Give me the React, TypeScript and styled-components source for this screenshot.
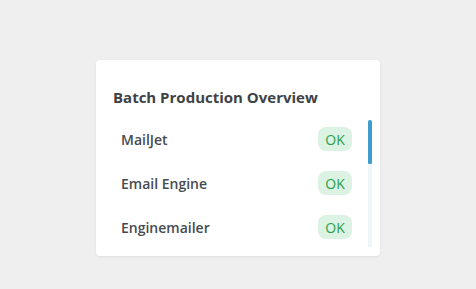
import * as React from 'react';
import styled, {createGlobalStyle} from 'styled-components';

const GlobalStyle = createGlobalStyle`
  html, body {
    margin: 0;
    padding: 0;
    background-color: #efefef;
    font-family: 'Open Sans', 'Noto Sans', sans-serif;
  }
`;

const Page = styled.div`
  display: flex;
  justify-content: center;
  padding-top: 60px;
  min-height: 229px;
`;

const Card = styled.div`
  width: 284px;
  height: 196px;
  box-sizing: border-box;
  padding: 27px 8px 9px 17px;
  background-color: #ffffff;
  border-radius: 4px;
  box-shadow: 0 1px 3px rgba(0, 0, 0, 0.07);
  display: flex;
  flex-direction: column;
`;

const Title = styled.h2`
  margin: 0 0 13px 0;
  font-size: 15px;
  line-height: 20px;
  font-weight: 700;
  color: #3e4246;
`;

const Body = styled.div`
  display: flex;
  height: 127px;
`;

const List = styled.ul`
  flex: 1;
  list-style: none;
  margin: 0;
  padding: 7px 0;
  overflow: hidden;
  display: flex;
  flex-direction: column;
  gap: 20px;
`;

const Row = styled.li`
  display: flex;
  align-items: center;
  justify-content: space-between;
  flex-shrink: 0;
  height: 24px;
  padding: 0 16px 0 8px;
`;

const Label = styled.span`
  font-size: 14px;
  font-weight: 600;
  color: #474b4f;
`;

const Badge = styled.span`
  display: inline-flex;
  align-items: center;
  justify-content: center;
  width: 34px;
  height: 24px;
  border-radius: 8px;
  background-color: ${({ok}: {ok: boolean}) => ok ? '#dcf2e2' : '#f9dede'};
  color: ${({ok}: {ok: boolean}) => ok ? '#28a04a' : '#c53b3b'};
  font-size: 14px;
`;

const ScrollTrack = styled.div`
  width: 4px;
  background-color: #eef6fa;
  display: flex;
  flex-direction: column;
`;

const ScrollThumb = styled.div`
  width: 4px;
  background-color: #3f9ccf;
  border-radius: 2px 2px 1px 1px;
`;

const services = [
  {name: 'MailJet', ok: true},
  {name: 'Email Engine', ok: true},
  {name: 'Enginemailer', ok: true},
];

const visibleRatio = 0.35;

const App: React.FunctionComponent = () => (
  <>
    <GlobalStyle />
    <Page>
      <Card>
        <Title>Batch Production Overview</Title>
        <Body>
          <List>
            {services.map(({name, ok}) => (
              <Row key={name}>
                <Label>{name}</Label>
                <Badge ok={ok}>OK</Badge>
              </Row>
            ))}
          </List>
          <ScrollTrack>
            <ScrollThumb style={{height: `${visibleRatio * 100}%`}} />
          </ScrollTrack>
        </Body>
      </Card>
    </Page>
  </>
);

export default App;
